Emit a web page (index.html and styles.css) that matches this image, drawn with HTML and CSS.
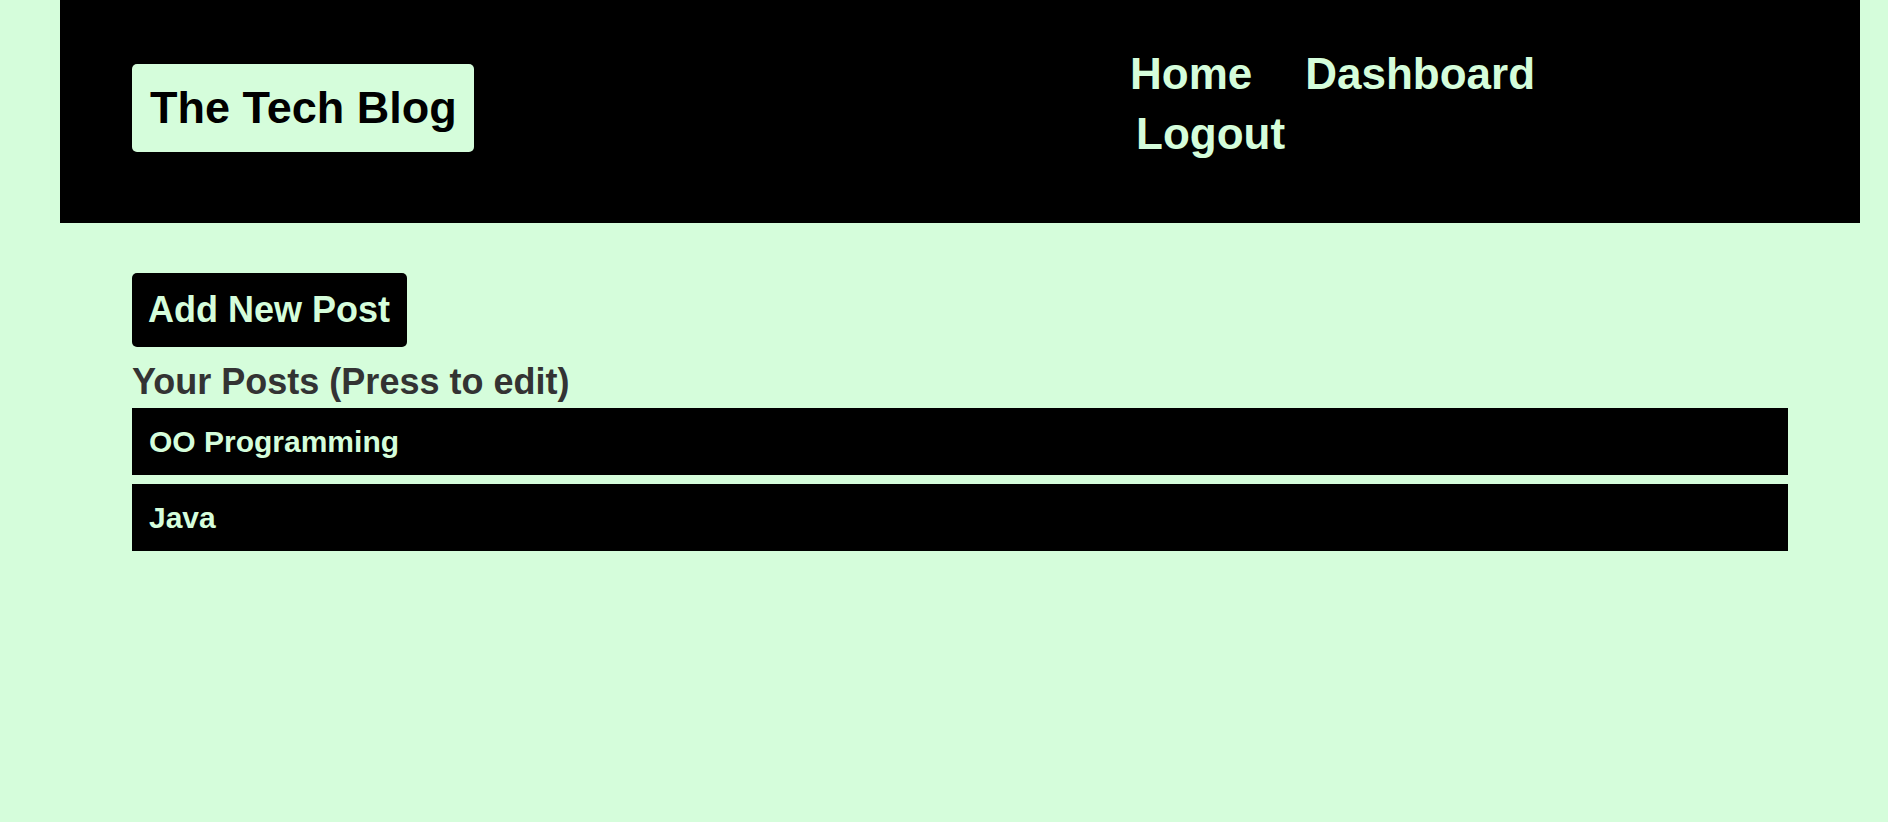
FILE: index.html
```html
<!DOCTYPE html>
<html lang="en">
<head>
<meta charset="utf-8">
<title>The Tech Blog</title>
<link rel="stylesheet" href="styles.css">
</head>
<body>
<header class="site-header">
  <div class="logo">The Tech Blog</div>
  <nav class="nav">
    <a class="nav-link" href="#">Home</a>
    <a class="nav-link" href="#">Dashboard</a>
    <a class="nav-link nav-logout" href="#">Logout</a>
  </nav>
</header>
<main class="dashboard">
  <button class="add-btn" type="button">Add New Post</button>
  <h2 class="posts-title">Your Posts (Press to edit)</h2>
  <ul class="post-list">
    <li class="post-item">OO Programming</li>
    <li class="post-item">Java</li>
  </ul>
</main>
</body>
</html>
```

FILE: styles.css
```css
* {
  box-sizing: border-box;
}

html, body {
  margin: 0;
  padding: 0;
}

body {
  background: #d5fddb;
  font-family: "Liberation Sans", Arial, sans-serif;
  font-weight: bold;
  min-height: 822px;
}

.site-header {
  margin: 0 28px 0 60px;
  height: 223px;
  background: #000;
  display: flex;
  align-items: flex-start;
  justify-content: space-between;
  padding: 44px 300px 0 72px;
}

.logo {
  margin-top: 20px;
  height: 88px;
  line-height: 88px;
  padding: 0 17px 0 18px;
  background: #d5fddb;
  color: #000;
  font-size: 45px;
  border-radius: 5px;
}

.nav {
  width: 430px;
  display: flex;
  flex-wrap: wrap;
  column-gap: 53px;
}

.nav-link {
  color: #d5fddb;
  text-decoration: none;
  font-size: 44px;
  line-height: 60px;
}

.nav-logout {
  margin-left: 6px;
}

.dashboard {
  padding: 50px 100px 0 132px;
}

.add-btn {
  display: block;
  margin: 0;
  border: 0;
  background: #000;
  color: #d5fddb;
  font-family: inherit;
  font-weight: bold;
  font-size: 36px;
  line-height: normal;
  padding: 16px 17px 16px 16px;
  border-radius: 5px;
}

.posts-title {
  margin: 14px 0 5px;
  color: #333;
  font-size: 36px;
  line-height: normal;
}

.post-list {
  list-style: none;
  margin: 0;
  padding: 0;
  display: flex;
  flex-direction: column;
  gap: 9px;
}

.post-item {
  background: #000;
  color: #d5fddb;
  font-size: 30px;
  line-height: normal;
  padding: 16.5px 17px;
}
```
